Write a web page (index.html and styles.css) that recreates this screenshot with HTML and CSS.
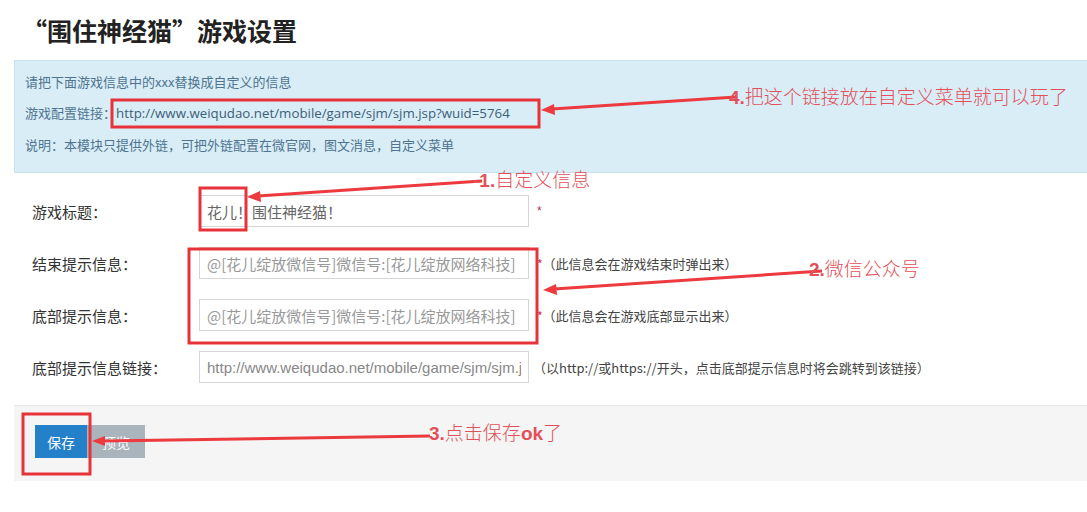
FILE: index.html
```html
<!DOCTYPE html>
<html lang="zh-CN">
<head>
    <meta charset="UTF-8">
    <title>围住神经猫 游戏设置</title>
    <link rel="stylesheet" href="styles.css">
</head>
<body>
    <div class="page">
        <h1 class="page-title">“围住神经猫”游戏设置</h1>

        <div class="alert">
            <p>请把下面游戏信息中的xxx替换成自定义的信息</p>
            <p>游戏配置链接：<span class="game-url">http://www.weiqudao.net/mobile/game/sjm/sjm.jsp?wuid=5764</span></p>
            <p>说明：本模块只提供外链，可把外链配置在微官网，图文消息，自定义菜单</p>
        </div>

        <form class="setting-form">
            <div class="form-row">
                <label for="title">游戏标题：</label>
                <input type="text" id="title" class="field" value="花儿！围住神经猫！">
                <span class="required">*</span>
            </div>
            <div class="form-row">
                <label for="end-msg">结束提示信息：</label>
                <input type="text" id="end-msg" class="field" placeholder="@[花儿绽放微信号]微信号:[花儿绽放网络科技]">
                <span class="hint"><span class="required">*</span>（此信息会在游戏结束时弹出来）</span>
            </div>
            <div class="form-row">
                <label for="foot-msg">底部提示信息：</label>
                <input type="text" id="foot-msg" class="field" placeholder="@[花儿绽放微信号]微信号:[花儿绽放网络科技]">
                <span class="hint"><span class="required">*</span>（此信息会在游戏底部显示出来）</span>
            </div>
            <div class="form-row">
                <label for="foot-link">底部提示信息链接：</label>
                <input type="text" id="foot-link" class="field field-url" value="http://www.weiqudao.net/mobile/game/sjm/sjm.jsp?wuid=5764">
                <span class="hint small">（以http://或https://开头，点击底部提示信息时将会跳转到该链接）</span>
            </div>
        </form>

        <div class="form-actions">
            <button type="button" class="btn btn-save">保存</button>
            <button type="button" class="btn btn-preview">预览</button>
        </div>
    </div>

    <!-- annotations drawn over the screenshot -->
    <svg class="notes" width="1087" height="512" viewBox="0 0 1087 512">
        <g class="note-box">
            <rect x="112" y="100" width="427" height="27"/>
            <rect x="200" y="188" width="46" height="42"/>
            <rect x="189" y="249" width="348" height="94"/>
            <rect x="23" y="414" width="67" height="60"/>
        </g>
        <g class="note-line">
            <line x1="736" y1="97" x2="552" y2="109"/>
            <line x1="482" y1="181" x2="258" y2="196"/>
            <line x1="822" y1="271" x2="554" y2="289"/>
            <line x1="430" y1="436" x2="104" y2="441"/>
        </g>
        <g class="note-head">
            <polygon points="541,110 554,104 555,115"/>
            <polygon points="247,197 260,191 261,202"/>
            <polygon points="543,290 556,284 557,295"/>
            <polygon points="92,441 105,436 105,446"/>
        </g>
        <g class="note-text">
            <text x="729" y="104"><tspan class="num">4.</tspan>把这个链接放在自定义菜单就可以玩了</text>
            <text x="473" y="187"><tspan class="num">-1.</tspan>自定义信息</text>
            <text x="809" y="276"><tspan class="num">2.</tspan>微信公众号</text>
            <text x="429" y="440"><tspan class="num">3.</tspan>点击保存<tspan class="num">ok</tspan>了</text>
        </g>
    </svg>
</body>
</html>
```

FILE: styles.css
```css
body {
    margin: 0;
    font-family: "Liberation Sans", "Noto Sans CJK SC", sans-serif;
    color: #333;
    background: #fff;
}

.page {
    width: 1087px;
}

.page-title {
    margin: 0;
    padding: 11px 0 0 22px;
    height: 49px;
    font-size: 25px;
    line-height: 38px;
    font-weight: bold;
    color: #222;
    font-family: "Noto Sans CJK SC", sans-serif;
}

.alert {
    margin-left: 14px;
    padding: 5px 10px 12px;
    background: #d9edf7;
    border: 1px solid #c9e3ee;
    border-right: none;
    color: #4f7490;
    font-size: 13px;
    font-family: "Noto Sans CJK SC", sans-serif;
}

.alert p {
    margin: 0;
    line-height: 31px;
}

.game-url {
    font-family: "Open Sans", "Liberation Sans", sans-serif;
    font-size: 13.3px;
    color: #3c5f78;
}

.setting-form {
    margin-top: 22px;
    padding-left: 32px;
}

.form-row {
    display: flex;
    align-items: center;
    height: 32px;
    margin-bottom: 20px;
}

.form-row label {
    width: 167px;
    font-size: 15px;
    color: #333;
    font-family: "Noto Sans CJK SC", sans-serif;
}

.field {
    box-sizing: border-box;
    width: 330px;
    height: 32px;
    padding: 0 7px;
    border: 1px solid #d6d6d6;
    font-size: 15px;
    color: #666;
    font-family: "Noto Sans CJK SC", sans-serif;
    outline: none;
}

.field::placeholder {
    color: #999;
}

.field-url {
    font-family: "Liberation Sans", sans-serif;
    font-size: 15px;
    color: #888;
}

.required {
    margin-left: 8px;
    color: #c0304a;
    font-size: 12px;
}

.hint {
    margin-left: 6px;
    font-size: 13px;
    color: #444;
    font-family: "Noto Sans CJK SC", sans-serif;
}

.hint .required {
    margin-left: 2px;
}

.hint.small {
    margin-left: 4px;
}

.form-actions {
    margin: 22px 0 0 14px;
    padding: 19px 21px;
    height: 37px;
    background: #f5f5f5;
    border-top: 1px solid #e6e6e6;
    display: flex;
}

.btn {
    height: 33px;
    border: none;
    color: #fff;
    font-size: 14px;
    font-family: "Noto Sans CJK SC", sans-serif;
    cursor: pointer;
}

.btn-save {
    width: 52px;
    background: #2380c9;
}

.btn-preview {
    width: 58px;
    background: #a9b4bd;
}

.notes {
    position: absolute;
    left: 0;
    top: 0;
    pointer-events: none;
}

.note-box rect {
    fill: none;
    stroke: #e8323a;
    stroke-width: 3;
}

.note-line line {
    stroke: #ec3a3f;
    stroke-width: 3;
}

.note-head polygon {
    fill: #ec3a3f;
}

.note-text text {
    font-family: "Noto Sans CJK SC", sans-serif;
    font-size: 19px;
    font-weight: 300;
    fill: #e2505a;
}

.note-text .num {
    font-weight: bold;
    font-family: "Liberation Sans", sans-serif;
}
```
